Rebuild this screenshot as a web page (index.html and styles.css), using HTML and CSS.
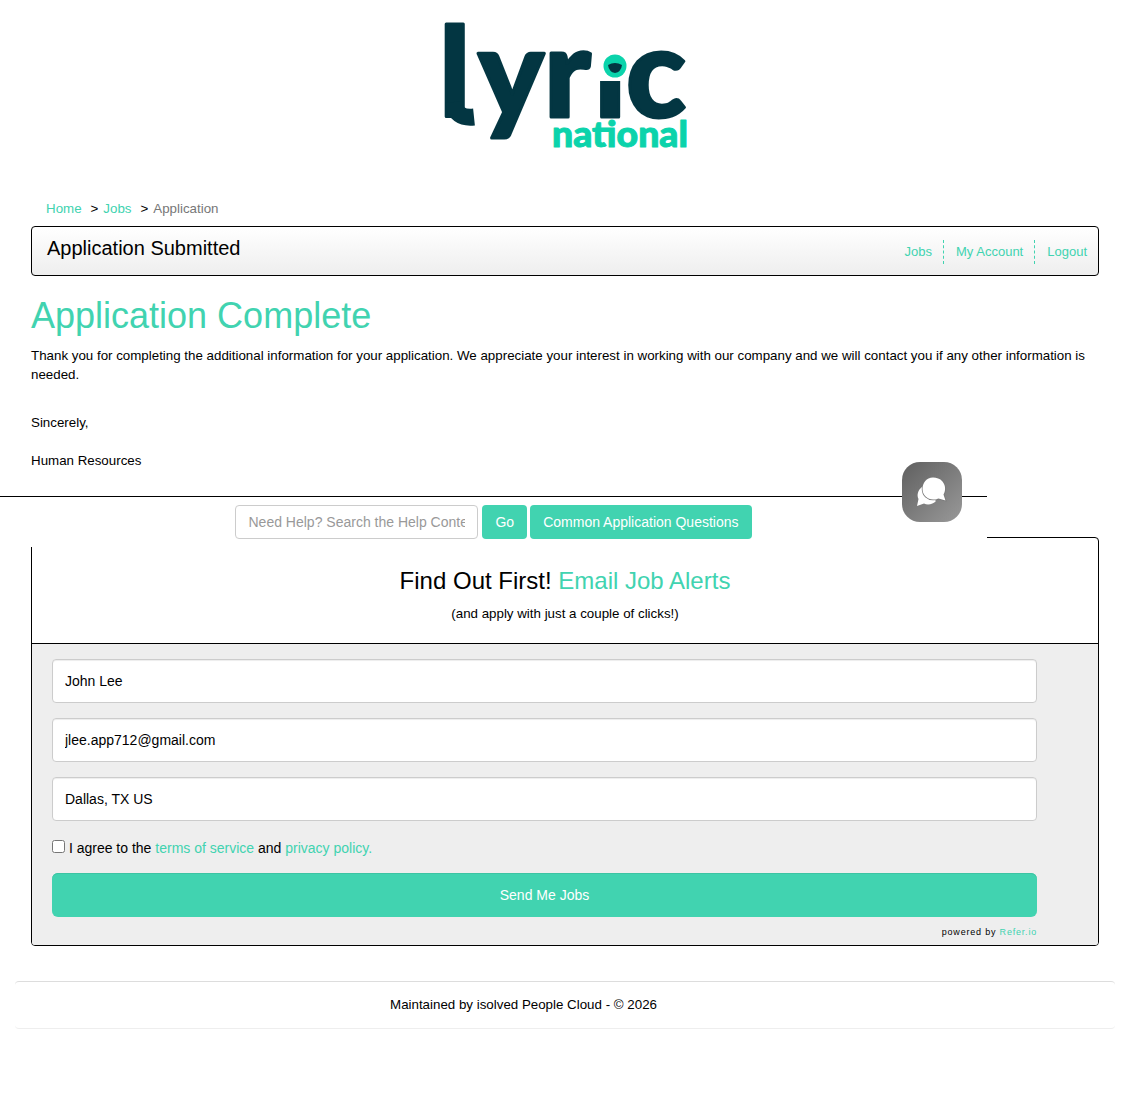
FILE: index.html
```html
<!DOCTYPE html>
<html lang="en">
<head>
  <meta charset="UTF-8">
  <meta name="viewport" content="width=device-width, initial-scale=1.0">
  <title>Application Submitted</title>
  <link rel="stylesheet" href="styles.css">
</head>
<body>
<div class="logo-row">
  <svg class="logo" width="260" height="150" viewBox="0 0 260 150" role="img" aria-label="lyric national">
    <text class="logo-word" x="-4 35 101 151 183" y="101">lyric</text>
    <path d="M11 86 q1 17 20 15" fill="none" stroke="#033642" stroke-width="17"/>
    <rect x="156" y="0" width="28" height="65" fill="#fff"/>
    <rect x="150" y="0" width="10" height="33" fill="#fff"/>
    <circle cx="172" cy="50" r="11.500" fill="#0bd3ab"/>
    <path d="M165 49 q7 -4 14 0 q-1 7 -7 8 q-6 -1 -7 -8z" fill="#033642"/>
    <text class="logo-sub" x="109" y="131" textLength="136" lengthAdjust="spacingAndGlyphs">national</text>
  </svg>
</div>

<div class="wrap">
  <div class="breadcrumb">
    <a href="#">Home</a><span class="sep">&gt;</span><a href="#">Jobs</a><span class="sep">&gt;</span><span class="current">Application</span>
  </div>

  <div class="title-bar">
    <h2>Application Submitted</h2>
    <nav class="title-nav">
      <a href="#">Jobs</a>
      <a href="#">My Account</a>
      <a href="#">Logout</a>
    </nav>
  </div>

  <h1>Application Complete</h1>
  <p class="thanks">Thank you for completing the additional information for your application. We appreciate your interest in working with our company and we will contact you if any other information is needed.</p>
  <p class="sign">Sincerely,</p>
  <p class="sign">Human Resources</p>
</div>

<div class="help-bar">
  <input class="help-input" type="text" placeholder="Need Help? Search the Help Content">
  <a href="#" class="btn btn-go">Go</a>
  <a href="#" class="btn btn-common">Common Application Questions</a>
  <a href="#" class="chat-btn" aria-label="Chat">
    <svg width="32" height="32" viewBox="0 0 32 32">
      <path d="M6 11 C2 14 0.500 19 2.500 23 L1 30 L8 27.500 C11.500 29.500 17 28.500 20 25 Z" fill="#fff"/>
      <path d="M17 1.500 C10.500 1.500 6.500 7 6.500 13 C6.500 19.500 12 24 18 23.500 C20 23.500 21.500 23 22.500 22.500 L29.500 24.500 L27.500 18.500 C30 14.500 29.500 9 26.500 5.500 C24 2.500 20.500 1.500 17 1.500z" fill="#fff" stroke="#777" stroke-width="1.500" paint-order="stroke"/>
    </svg>
  </a>
</div>

<div class="alerts">
  <div class="alerts-head">
    <h3>Find Out First! <a href="#">Email Job Alerts</a></h3>
    <p>(and apply with just a couple of clicks!)</p>
  </div>
  <form class="alerts-form">
    <input class="field" type="text" value="John Lee">
    <input class="field" type="text" value="jlee.app712@gmail.com">
    <input class="field" type="text" value="Dallas, TX US">
    <label class="agree"><input type="checkbox"> I agree to the <a href="#">terms of service</a> and <a href="#">privacy policy.</a></label>
    <button class="send-btn" type="button">Send Me Jobs</button>
    <div class="powered">powered by <a href="#">Refer.io</a></div>
  </form>
</div>

<div class="footer">Maintained by isolved People Cloud - © 2026</div>
</body>
</html>
```

FILE: styles.css
```css
body {
  margin: 0;
  font-family: "Liberation Sans", Arial, sans-serif;
  font-size: 13.33px;
  color: #000;
  background-color: #fff;
}
a {
  color: #41d3b0;
  text-decoration: none;
}
.logo-row {
  height: 199px;
  padding-top: 16px;
  box-sizing: border-box;
  display: flex;
  justify-content: center;
}
.logo {
  margin-left: 16px;
  overflow: visible;
}
.logo-word {
  font-family: Lato, sans-serif;
  font-weight: 900;
  font-size: 124px;
  fill: #033642;
  stroke: #033642;
  stroke-width: 3px;
  stroke-linejoin: round;
}
.logo-sub {
  font-family: Lato, sans-serif;
  font-weight: 900;
  font-size: 36px;
  fill: #0bd3ab;
  stroke: #0bd3ab;
  stroke-width: 1px;
  stroke-linejoin: round;
}
.wrap {
  padding: 0 31px;
}
.breadcrumb {
  padding-left: 15px;
  height: 27px;
  line-height: 19px;
}
.sep {
  margin: 0 5px 0 9px;
}
.current {
  color: #777;
}
.title-bar {
  display: flex;
  justify-content: space-between;
  height: 50px;
  box-sizing: border-box;
  border: 1px solid #000;
  border-radius: 4px;
  background: linear-gradient(#fff, #eee);
  padding: 0 0 0 15px;
}
.title-bar h2 {
  margin: 9px 0 0;
  font-size: 20px;
  line-height: 24px;
  font-weight: normal;
}
.title-nav {
  display: flex;
  align-items: center;
  margin-top: 1px;
  font-size: 13px;
}
.title-nav a {
  padding: 3px 11px 3px 12px;
  line-height: 18px;
  border-left: 1px dashed #41d3b0;
}
.title-nav a:first-child {
  border-left: none;
}
h1 {
  margin: 20px 0 0;
  font-size: 36px;
  line-height: 40px;
  font-weight: normal;
  color: #41d3b0;
}
.thanks {
  margin: 10px 0 0;
  line-height: 19px;
}
.sign {
  margin: 19px 0 0;
  line-height: 19px;
}
.thanks + .sign {
  margin-top: 29px;
}
.help-bar {
  position: relative;
  z-index: 1;
  width: 987px;
  height: 51px;
  box-sizing: border-box;
  margin-top: 26px;
  border-top: 1px solid #000;
  background-color: #fff;
  display: flex;
  justify-content: center;
  padding-top: 8px;
}
.help-input {
  width: 243px;
  height: 34px;
  box-sizing: border-box;
  padding: 0 12px;
  border: 1px solid #ccc;
  border-radius: 4px;
  font-family: inherit;
  font-size: 14px;
}
.help-input::placeholder {
  color: #999;
}
.btn {
  height: 34px;
  line-height: 34px;
  padding: 0 13px;
  border-radius: 4px;
  background-color: #41d3b0;
  color: #fff;
  font-size: 14px;
}
.btn-go {
  margin-left: 4px;
}
.btn-common {
  margin-left: 3px;
}
.chat-btn {
  position: absolute;
  left: 902px;
  top: -35px;
  width: 60px;
  height: 60px;
  border-radius: 18px;
  background: linear-gradient(135deg, #5f5f5f, #999);
  display: flex;
  align-items: center;
  justify-content: center;
}
.alerts {
  margin: -10px 31px 0;
  border: 1px solid #000;
  border-radius: 4px;
  overflow: hidden;
}
.alerts-head {
  height: 106px;
  box-sizing: border-box;
  border-bottom: 1px solid #000;
  text-align: center;
  padding-top: 28px;
}
.alerts-head h3 {
  margin: 0;
  font-size: 24px;
  line-height: 30px;
  font-weight: normal;
}
.alerts-head p {
  margin: 8px 0 0;
  line-height: 19px;
}
.alerts-form {
  display: flex;
  flex-direction: column;
  gap: 15px;
  background-color: #eee;
  padding: 15px 61px 0 20px;
  height: 301px;
  box-sizing: border-box;
}
.field {
  height: 44px;
  box-sizing: border-box;
  padding: 0 12px;
  border: 1px solid #ccc;
  border-radius: 4px;
  box-shadow: inset 0 1px 1px rgba(0, 0, 0, .075);
  font-family: inherit;
  font-size: 14px;
}
.agree {
  height: 20px;
  line-height: 20px;
  margin-top: 2px;
  font-size: 14px;
}
.agree input {
  margin: 0;
  width: 13px;
  height: 13px;
}
.send-btn {
  height: 44px;
  padding: 0 0 1px;
  border: none;
  box-shadow: inset 0 1px 0 #3cc4a3;
  border-radius: 6px;
  background-color: #41d3b0;
  color: #fff;
  font-family: inherit;
  font-size: 14px;
}
.powered {
  margin-top: -6px;
  text-align: right;
  font-size: 9px;
  letter-spacing: .8px;
  line-height: 12px;
}
.footer {
  margin: 35px 15px 0;
  height: 48px;
  box-sizing: border-box;
  border-top: 1px solid #ddd;
  border-bottom: 1px solid #eee;
  border-radius: 4px;
  padding-right: 83px;
  text-align: center;
  line-height: 46px;
}
```
